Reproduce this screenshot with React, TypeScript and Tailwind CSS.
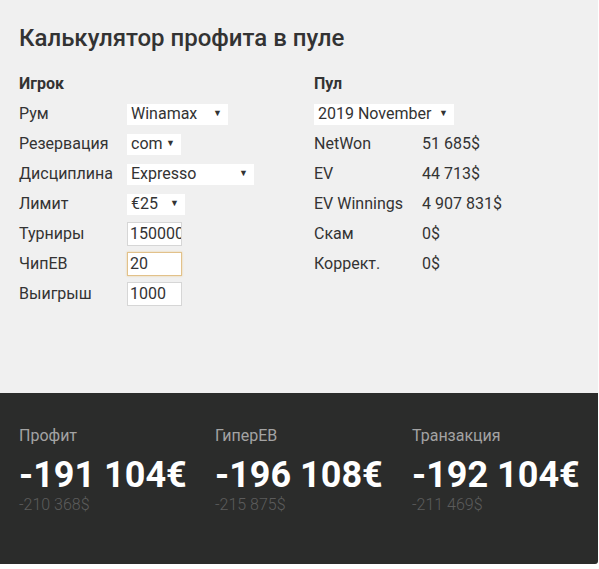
import React from "react";

function Sel({ value, w }: { value: string; w: string }) {
  return (
    <div className={`${w} h-[21px] bg-white flex items-center justify-between pl-[4px] pr-[6px]`}>
      <span className="text-[16px] text-[#333]">{value}</span>
      <span className="text-[9px] text-[#333]">▼</span>
    </div>
  );
}

function Inp({ value, focus }: { value: string; focus?: boolean }) {
  return (
    <div
      className={`w-[55px] h-[24px] bg-white overflow-hidden flex items-center pl-[2px] border ${
        focus ? "border-[#e2c18a] shadow-[0_0_2px_#e9cf9f]" : "border-[#d6d6d6]"
      }`}
    >
      <span className="text-[16px] text-[#333] whitespace-nowrap">{value}</span>
    </div>
  );
}

function Row({ label, children }: { label: string; children: React.ReactNode }) {
  return (
    <div className="h-[30px] flex items-center">
      <div className="w-[108px] text-[16px] text-[#333]">{label}</div>
      {children}
    </div>
  );
}

function Stat({ label, big, small }: { label: string; big: string; small: string }) {
  return (
    <div className="pl-[19px]">
      <div className="text-[16px] text-[#a3a3a3] leading-[20px]">{label}</div>
      <div className="text-[36px] font-bold text-white leading-[44px] mt-[7px]">{big}</div>
      <div className="text-[16px] text-[#5c5c5c] leading-[16px] font-light">{small}</div>
    </div>
  );
}

export default function App() {
  return (
    <div className="w-[599px] h-[569px] bg-white" style={{ fontFamily: "Roboto, 'Noto Sans', sans-serif" }}>
      <div className="w-[598px] h-[564px] bg-[#f0f0f0] rounded-br-[3px] flex flex-col">
        <div className="h-[393px] px-[19px]">
          <h1 className="pt-[24px] text-[24px] font-medium text-[#333] leading-[28px]">Калькулятор профита в пуле</h1>
          <div className="mt-[17px] flex">
            <div className="w-[295px]">
              <div className="h-[30px] flex items-center text-[16px] font-bold text-[#333]">Игрок</div>
              <Row label="Рум"><Sel value="Winamax" w="w-[101px]" /></Row>
              <Row label="Резервация"><Sel value="com" w="w-[54px]" /></Row>
              <Row label="Дисциплина"><Sel value="Expresso" w="w-[127px]" /></Row>
              <Row label="Лимит"><Sel value="€25" w="w-[58px]" /></Row>
              <Row label="Турниры"><Inp value="150000" /></Row>
              <Row label="ЧипЕВ"><Inp value="20" focus /></Row>
              <Row label="Выигрыш"><Inp value="1000" /></Row>
            </div>
            <div className="flex-1">
              <div className="h-[30px] flex items-center text-[16px] font-bold text-[#333]">Пул</div>
              <div className="h-[30px] flex items-center">
                <Sel value="2019 November" w="w-[140px]" />
              </div>
              <Row label="NetWon"><span className="text-[16px] text-[#333]">51 685$</span></Row>
              <Row label="EV"><span className="text-[16px] text-[#333]">44 713$</span></Row>
              <Row label="EV Winnings"><span className="text-[16px] text-[#333]">4 907 831$</span></Row>
              <Row label="Скам"><span className="text-[16px] text-[#333]">0$</span></Row>
              <Row label="Коррект."><span className="text-[16px] text-[#333]">0$</span></Row>
            </div>
          </div>
        </div>
        <div className="flex-1 bg-[#2b2c2b] rounded-br-[3px] pt-[33px] grid grid-cols-[196px_197px_1fr]">
          <Stat label="Профит" big="-191 104€" small="-210 368$" />
          <Stat label="ГиперЕВ" big="-196 108€" small="-215 875$" />
          <Stat label="Транзакция" big="-192 104€" small="-211 469$" />
        </div>
      </div>
    </div>
  );
}
